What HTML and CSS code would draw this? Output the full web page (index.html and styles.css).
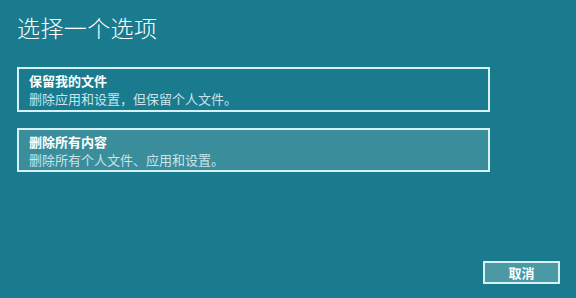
FILE: index.html
```html
<!DOCTYPE html>
<html lang="zh-CN">
<head>
<meta charset="utf-8">
<link rel="stylesheet" href="styles.css">
</head>
<body>
<div class="page">
  <h1 class="title">选择一个选项</h1>
  <div class="options">
    <div class="option">
      <div class="opt-name">保留我的文件</div>
      <div class="opt-desc">删除应用和设置，但保留个人文件。</div>
    </div>
    <div class="option selected">
      <div class="opt-name">删除所有内容</div>
      <div class="opt-desc">删除所有个人文件、应用和设置。</div>
    </div>
  </div>
  <div class="footer">
    <div class="btn">取消</div>
  </div>
</div>
</body>
</html>
```

FILE: styles.css
```css
html, body {
  margin: 0;
  padding: 0;
}
body {
  width: 576px;
  height: 298px;
  overflow: hidden;
  background: #1a7b8f;
  font-family: "Microsoft YaHei", "Noto Sans CJK SC", "Noto Sans", sans-serif;
  color: #ffffff;
}
.page {
  display: flex;
  flex-direction: column;
  height: 298px;
  box-sizing: border-box;
  padding: 12px 0 0 17px;
}
.title {
  margin: 0;
  font-size: 23px;
  font-weight: 300;
  line-height: 30px;
  letter-spacing: 0.4px;
}
.options {
  display: flex;
  flex-direction: column;
  gap: 16px;
  margin-top: 25px;
  width: 473px;
}
.option {
  border: 2px solid #d6f2f6;
  padding: 3px 10px 2px 10px;
  height: 45px;
  box-sizing: border-box;
}
.option.selected {
  background: #3a8e9b;
  height: 44px;
}
.opt-name {
  font-size: 13px;
  font-weight: 700;
  line-height: 18px;
  color: #ffffff;
}
.opt-desc {
  font-size: 13px;
  line-height: 18px;
  color: #c8e4ea;
}
.footer {
  margin-top: auto;
  display: flex;
  justify-content: flex-end;
  padding: 0 16px 14px 0;
}
.btn {
  width: 77px;
  height: 23px;
  box-sizing: border-box;
  border: 2px solid #d6f2f6;
  background: #4a99a5;
  display: flex;
  align-items: center;
  justify-content: center;
  font-size: 13px;
  font-weight: 700;
  color: #ffffff;
}
```
